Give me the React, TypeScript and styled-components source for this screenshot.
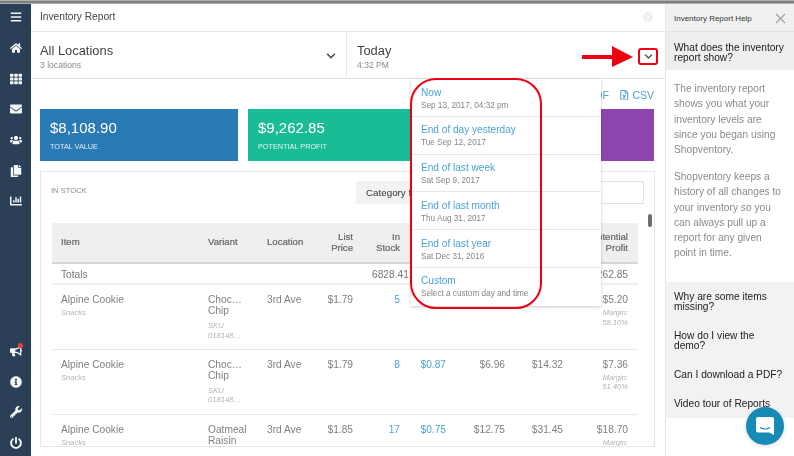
import React, { FC } from 'react'
import styled, { createGlobalStyle } from 'styled-components'
import {
  FaBars,
  FaHome,
  FaTh,
  FaEnvelope,
  FaUsers,
  FaCopy,
  FaChartBar,
  FaBullhorn,
  FaInfoCircle,
  FaWrench,
  FaPowerOff,
  FaChevronDown,
  FaChevronRight,
  FaRegFilePdf,
  FaRegFileExcel
} from 'react-icons/fa'

const GlobalStyle = createGlobalStyle`
  html, body {
    margin: 0;
    padding: 0;
    overflow: hidden;
    background: #fff;
    font-family: "Liberation Sans", Arial, sans-serif;
  }
  * { box-sizing: border-box; }
`

const Page = styled.div`
  width: 794px;
  height: 456px;
  display: flex;
  flex-direction: column;
  overflow: hidden;
  position: relative;
  filter: blur(0.3px);
`
const TopEdge = styled.div`
  height: 4px;
  flex: none;
  background: linear-gradient(#c9c9c9 0, #6f7274 45%, #8c8f91 80%, #dcdcdc 100%);
`
const Shell = styled.div`
  flex: 1;
  display: flex;
  min-height: 0;
`
const Sidebar = styled.nav`
  width: 31px;
  flex: none;
  background: #2b3f57;
  display: flex;
  flex-direction: column;
  justify-content: space-between;
  color: #fff;
`
const NavGroup = styled.div<{ $bottom?: boolean }>`
  display: flex;
  flex-direction: column;
  margin: ${(props) => (props.$bottom ? '0 0 -2.5px' : '-2px 0 0')};
`
const NavItem = styled.div`
  height: 30.7px;
  display: flex;
  align-items: center;
  justify-content: center;
  position: relative;
  font-size: 12px;
  color: #f4f6f8;
`
const NoticeDot = styled.span`
  position: absolute;
  top: 7px;
  left: 18px;
  width: 5px;
  height: 5px;
  border-radius: 50%;
  background: #e8412f;
`
const Main = styled.main`
  flex: 1;
  min-width: 0;
  display: flex;
  flex-direction: column;
`
const TitleBar = styled.header`
  height: 28px;
  flex: none;
  display: flex;
  align-items: center;
  justify-content: space-between;
  padding: 0 12px 2px 9px;
  border-bottom: 1px solid #e6e6e6;
  font-size: 10.2px;
  color: #444;
`
const HintIcon = styled.span`
  width: 10px;
  height: 10px;
  border-radius: 50%;
  background: #f0f0f0;
  color: #fff;
  font-size: 6px;
  display: flex;
  align-items: center;
  justify-content: center;
`
const FilterBar = styled.div`
  height: 47px;
  flex: none;
  display: flex;
  border-bottom: 1px solid #e2e2e2;
`
const LocationSelector = styled.div`
  width: 316px;
  flex: none;
  display: flex;
  align-items: center;
  justify-content: space-between;
  padding: 2px 10px 0 9px;
  border-right: 1px solid #e8e8e8;
`
const DateSelector = styled.div`
  position: relative;
  flex: 1;
  display: flex;
  align-items: center;
  padding: 2px 0 0 10px;
`
const SelectorText = styled.div`
  display: flex;
  flex-direction: column;
  gap: 2px;
`
const SelectorTitle = styled.div`
  font-size: 12.9px;
  line-height: 15px;
  color: #444;
`
const SelectorSub = styled.div`
  font-size: 8.6px;
  line-height: 10px;
  color: #8c8c8c;
`
const Caret = styled.span<{ $small?: boolean }>`
  display: flex;
  color: #555;
  font-size: ${(props) => (props.$small ? '9px' : '10px')};
`
const Content = styled.div`
  flex: 1;
  min-height: 0;
  padding: 0 10px 9px 9px;
  display: flex;
  flex-direction: column;
`
const ExportRow = styled.div`
  height: 30px;
  flex: none;
  display: flex;
  justify-content: flex-end;
  align-items: center;
  gap: 10px;
  padding: 2px 1px 0 0;
  font-size: 10.5px;
  color: #4a9fd8;
`
const ExportLink = styled.span`
  display: flex;
  align-items: center;
  gap: 3px;
`
const Cards = styled.div`
  display: grid;
  grid-template-columns: repeat(3, 198px);
  gap: 10px;
  flex: none;
`
const Card = styled.div<{ $color: string }>`
  height: 52px;
  background: ${(props) => props.$color};
  color: #fff;
  padding: 10px 10px 0;
`
const CardValue = styled.div`
  font-size: 15px;
  line-height: 17px;
`
const CardLabel = styled.div`
  margin-top: 6px;
  font-size: 7.3px;
  line-height: 10px;
  opacity: 0.85;
`
const StockPanel = styled.section`
  position: relative;
  margin-top: 10px;
  flex: 1;
  min-height: 0;
  border: 1px solid #e6e6e6;
  overflow: hidden;
  padding: 9px 10px 0 11px;
`
const PanelHead = styled.div`
  display: flex;
  justify-content: space-between;
  height: 42px;
`
const PanelLabel = styled.div`
  font-size: 7.6px;
  color: #8a8a8a;
  padding-top: 5px;
  margin-left: -1px;
`
const FilterGroup = styled.div`
  display: flex;
  height: 23px;
`
const FilterLabel = styled.div`
  width: 92px;
  background: #f2f2f2;
  font-size: 9.8px;
  color: #333;
  padding: 6px 0 0 10px;
`
const FilterInput = styled.div`
  width: 196px;
  border: 1px solid #e2e2e2;
`
const ScrollThumb = styled.span`
  position: absolute;
  left: 607px;
  top: 42px;
  width: 4px;
  height: 13px;
  border-radius: 2px;
  background: #6a6e72;
`
const Table = styled.table`
  width: 586px;
  border-collapse: collapse;
  table-layout: fixed;
`
const HeadCell = styled.th<{ $right?: boolean }>`
  height: 40px;
  background: #efefef;
  border-bottom: 2px solid #d6d6d6;
  font-size: 9.6px;
  line-height: 10.4px;
  font-weight: normal;
  color: #666;
  vertical-align: middle;
  padding: 0 10px 0 9px;
  text-align: ${(props) => (props.$right ? 'right' : 'left')};
  -webkit-text-stroke: 0.2px #666;
`
const TotalCell = styled.td<{ $right?: boolean }>`
  height: 21px;
  border-bottom: 2px solid #efefef;
  font-size: 10.2px;
  color: #777;
  padding: 2px 10px 0 9px;
  white-space: nowrap;
  text-align: ${(props) => (props.$right ? 'right' : 'left')};
`
const WideTotal = styled.span`
  margin-right: -8px;
`
const Cell = styled.td<{ $right?: boolean; $link?: boolean }>`
  height: 65px;
  border-bottom: 1px solid #e9e9e9;
  vertical-align: top;
  padding: 9px 10px 0 9px;
  font-size: 10.2px;
  line-height: 11px;
  color: ${(props) => (props.$link ? '#4a9fd8' : '#808080')};
  text-align: ${(props) => (props.$right ? 'right' : 'left')};
`
const SubText = styled.div`
  margin-top: 3px;
  font-size: 7.6px;
  line-height: 9.5px;
  font-style: italic;
  color: #b2b2b2;
`
const SkuText = styled(SubText)`
  margin-top: 5px;
  white-space: nowrap;
`
const Dropdown = styled.ul`
  position: absolute;
  top: 47px;
  left: 64px;
  width: 190px;
  margin: 0;
  padding: 0;
  list-style: none;
  background: #fff;
  box-shadow: 0 1px 3px rgba(0, 0, 0, 0.22);
  z-index: 5;
`
const DropdownItem = styled.li`
  height: 37.8px;
  padding: 6.5px 4px 0 10px;
  border-bottom: 1px solid #e6e6e6;
  &:last-child {
    border-bottom: none;
  }
`
const DropdownLink = styled.div`
  font-size: 10.1px;
  line-height: 13px;
  color: #4a9fd8;
`
const DropdownSub = styled.div`
  margin-top: 2px;
  font-size: 8.2px;
  line-height: 10px;
  color: #858585;
`
const RedOutline = styled.div`
  position: absolute;
  top: 46px;
  left: 63px;
  width: 132px;
  height: 231px;
  border: 2.5px solid #ee0012;
  border-radius: 26px;
  z-index: 6;
`
const RedBox = styled.div`
  position: absolute;
  top: 16px;
  right: 7px;
  width: 20px;
  height: 17px;
  border: 2px solid #ee0012;
  border-radius: 3px;
  display: flex;
  align-items: center;
  justify-content: center;
`
const RedArrow = styled.svg`
  position: absolute;
  top: 14px;
  left: 235px;
`
const Help = styled.aside`
  width: 129px;
  flex: none;
  border-left: 1px solid #e6e6e6;
  display: flex;
  flex-direction: column;
  position: relative;
`
const HelpHead = styled.div`
  height: 28px;
  flex: none;
  display: flex;
  align-items: center;
  justify-content: space-between;
  padding: 1px 8px 0 8px;
  background: #f1f1f1;
  border-bottom: 1px solid #e4e4e4;
  font-size: 8px;
  color: #333;
`
const CloseMark = styled.svg`
  display: block;
`
const HelpQuestion = styled.div`
  height: 38px;
  flex: none;
  background: #eeeeee;
  padding: 11px 6px 0 8px;
  font-size: 10.2px;
  line-height: 10px;
  color: #222;
`
const HelpBody = styled.div`
  height: 212px;
  flex: none;
  padding: 11px 8px 0 8px;
  font-size: 10.2px;
  line-height: 15.3px;
  color: #8a8a8a;
`
const HelpParagraph = styled.p`
  margin: 0 0 11.5px;
`
const HelpList = styled.div`
  height: 136px;
  flex: none;
  background: #f2f2f2;
  padding: 10px 11px 0 8px;
`
const HelpLink = styled.div`
  font-size: 10.2px;
  line-height: 10px;
  color: #222;
  margin-bottom: 19px;
`
const ChatBubble = styled.div`
  position: absolute;
  left: 80px;
  top: 403px;
  width: 38px;
  height: 38px;
  border-radius: 50%;
  background: #168bb5;
  display: flex;
  align-items: center;
  justify-content: center;
  z-index: 7;
  box-shadow: 0 1px 4px rgba(0, 0, 0, 0.15);
`

interface iRow {
  name: string
  variant: string[]
  sku?: boolean
  location: string
  list: string
  stock: string
  cost?: string
  value?: string
  retail?: string
  profit: string
  margin?: string
}

// the dropdown hides the cost columns of the first row, so they stay empty
const rows: iRow[] = [
  {
    name: 'Alpine Cookie',
    variant: ['Choc…', 'Chip'],
    sku: true,
    location: '3rd Ave',
    list: '$1.79',
    stock: '5',
    profit: '$5.20',
    margin: '58.10%'
  },
  {
    name: 'Alpine Cookie',
    variant: ['Choc…', 'Chip'],
    sku: true,
    location: '3rd Ave',
    list: '$1.79',
    stock: '8',
    cost: '$0.87',
    value: '$6.96',
    retail: '$14.32',
    profit: '$7.36',
    margin: '51.40%'
  },
  {
    name: 'Alpine Cookie',
    variant: ['Oatmeal', 'Raisin'],
    location: '3rd Ave',
    list: '$1.85',
    stock: '17',
    cost: '$0.75',
    value: '$12.75',
    retail: '$31.45',
    profit: '$18.70'
  }
]

const dropdownItems = [
  ['Now', 'Sep 13, 2017, 04:32 pm'],
  ['End of day yesterday', 'Tue Sep 12, 2017'],
  ['End of last week', 'Sat Sep 9, 2017'],
  ['End of last month', 'Thu Aug 31, 2017'],
  ['End of last year', 'Sat Dec 31, 2016'],
  ['Custom', 'Select a custom day and time']
]

const columnWidths = [147, 59, 60, 45, 47, 46, 59, 58, 65]

const App: FC = () => {
  return (
    <Page>
      <GlobalStyle />
      <TopEdge />
      <Shell>
        <Sidebar>
          <NavGroup>
            <NavItem><FaBars /></NavItem>
            <NavItem><FaHome /></NavItem>
            <NavItem><FaTh /></NavItem>
            <NavItem><FaEnvelope /></NavItem>
            <NavItem><FaUsers /></NavItem>
            <NavItem><FaCopy /></NavItem>
            <NavItem><FaChartBar /></NavItem>
          </NavGroup>
          <NavGroup $bottom>
            <NavItem>
              <FaBullhorn />
              <NoticeDot />
            </NavItem>
            <NavItem><FaInfoCircle /></NavItem>
            <NavItem><FaWrench /></NavItem>
            <NavItem><FaPowerOff /></NavItem>
          </NavGroup>
        </Sidebar>
        <Main>
          <TitleBar>
            Inventory Report
            <HintIcon><FaChevronRight /></HintIcon>
          </TitleBar>
          <FilterBar>
            <LocationSelector>
              <SelectorText>
                <SelectorTitle>All Locations</SelectorTitle>
                <SelectorSub>3 locations</SelectorSub>
              </SelectorText>
              <Caret><FaChevronDown /></Caret>
            </LocationSelector>
            <DateSelector>
              <SelectorText>
                <SelectorTitle>Today</SelectorTitle>
                <SelectorSub>4:32 PM</SelectorSub>
              </SelectorText>
              <RedArrow width="52" height="22" viewBox="0 0 52 22">
                <rect x="0" y="9" width="32" height="4" fill="#ee0012" />
                <polygon points="30,0 51,11 30,21" fill="#ee0012" />
              </RedArrow>
              <RedBox>
                <Caret $small><FaChevronDown /></Caret>
              </RedBox>
              <Dropdown>
                {dropdownItems.map(([label, sub]) => (
                  <DropdownItem key={label}>
                    <DropdownLink>{label}</DropdownLink>
                    <DropdownSub>{sub}</DropdownSub>
                  </DropdownItem>
                ))}
              </Dropdown>
              <RedOutline />
            </DateSelector>
          </FilterBar>
          <Content>
            <ExportRow>
              <ExportLink><FaRegFilePdf /> PDF</ExportLink>
              <ExportLink><FaRegFileExcel /> CSV</ExportLink>
            </ExportRow>
            <Cards>
              <Card $color="#2a7ab5">
                <CardValue>$8,108.90</CardValue>
                <CardLabel>TOTAL VALUE</CardLabel>
              </Card>
              <Card $color="#1abc96">
                <CardValue>$9,262.85</CardValue>
                <CardLabel>POTENTIAL PROFIT</CardLabel>
              </Card>
              <Card $color="#8e44ad" />
            </Cards>
            <StockPanel>
              <PanelHead>
                <PanelLabel>IN STOCK</PanelLabel>
                <FilterGroup>
                  <FilterLabel>Category filter</FilterLabel>
                  <FilterInput />
                </FilterGroup>
              </PanelHead>
              <ScrollThumb />
              <Table>
                <colgroup>
                  {columnWidths.map((width, index) => (
                    <col key={index} width={width} />
                  ))}
                </colgroup>
                <thead>
                  <tr>
                    <HeadCell>Item</HeadCell>
                    <HeadCell>Variant</HeadCell>
                    <HeadCell>Location</HeadCell>
                    <HeadCell $right>List Price</HeadCell>
                    <HeadCell $right>In Stock</HeadCell>
                    <HeadCell $right />
                    <HeadCell $right />
                    <HeadCell $right />
                    <HeadCell $right>Potential Profit</HeadCell>
                  </tr>
                </thead>
                <tbody>
                  <tr>
                    <TotalCell>Totals</TotalCell>
                    <TotalCell />
                    <TotalCell />
                    <TotalCell />
                    <TotalCell $right><WideTotal>6828.41</WideTotal></TotalCell>
                    <TotalCell />
                    <TotalCell />
                    <TotalCell />
                    <TotalCell $right>$9,262.85</TotalCell>
                  </tr>
                  {rows.map((row, index) => (
                    <tr key={index}>
                      <Cell>
                        {row.name}
                        <SubText>Snacks</SubText>
                      </Cell>
                      <Cell>
                        {row.variant.map((part) => (
                          <div key={part}>{part}</div>
                        ))}
                        {row.sku && (
                          <SkuText>
                            SKU
                            <br />
                            018148…
                          </SkuText>
                        )}
                      </Cell>
                      <Cell>{row.location}</Cell>
                      <Cell $right>{row.list}</Cell>
                      <Cell $right $link>{row.stock}</Cell>
                      <Cell $right $link>{row.cost}</Cell>
                      <Cell $right>{row.value}</Cell>
                      <Cell $right>{row.retail}</Cell>
                      <Cell $right>
                        {row.profit}
                        <SubText>
                          Margin:
                          <br />
                          {row.margin}
                        </SubText>
                      </Cell>
                    </tr>
                  ))}
                </tbody>
              </Table>
            </StockPanel>
          </Content>
        </Main>
        <Help>
          <HelpHead>
            Inventory Report Help
            <CloseMark width="11" height="11" viewBox="0 0 11 11">
              <path d="M1 1 L10 10 M10 1 L1 10" stroke="#a0a0a0" strokeWidth="1.2" fill="none" />
            </CloseMark>
          </HelpHead>
          <HelpQuestion>What does the inventory report show?</HelpQuestion>
          <HelpBody>
            <HelpParagraph>
              The inventory report shows you what your inventory levels are since you began using Shopventory.
            </HelpParagraph>
            <HelpParagraph>
              Shopventory keeps a history of all changes to your inventory so you can always pull up a report for any given point in time.
            </HelpParagraph>
          </HelpBody>
          <HelpList>
            <HelpLink>Why are some items missing?</HelpLink>
            <HelpLink>How do I view the demo?</HelpLink>
            <HelpLink>Can I download a PDF?</HelpLink>
            <HelpLink>Video tour of Reports</HelpLink>
          </HelpList>
          <ChatBubble>
            <svg width="20" height="20" viewBox="0 0 20 20">
              <path
                d="M3 1 H17 A2 2 0 0 1 19 3 V19 L14.5 16.5 H3 A2 2 0 0 1 1 14.5 V3 A2 2 0 0 1 3 1 Z"
                fill="#fff"
              />
              <path d="M5 11.5 Q10 14.5 15 11.5" stroke="#168bb5" strokeWidth="1.2" fill="none" />
            </svg>
          </ChatBubble>
        </Help>
      </Shell>
    </Page>
  )
}

export default App
